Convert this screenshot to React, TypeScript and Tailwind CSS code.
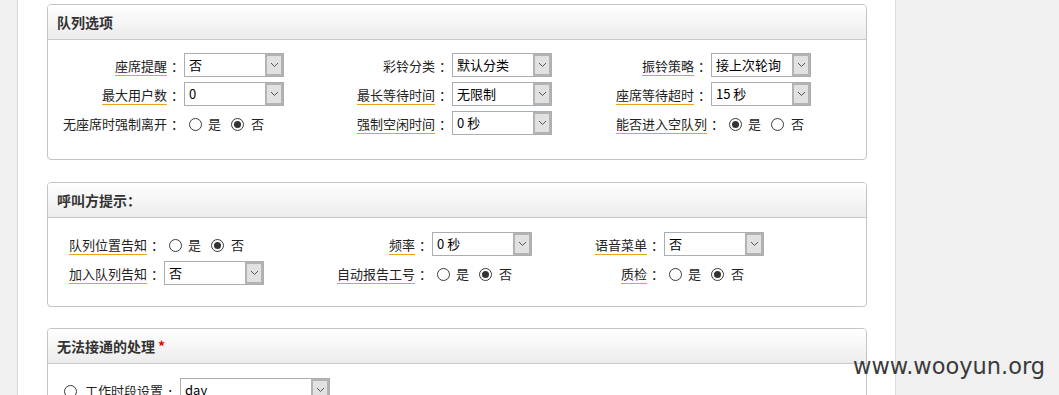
const FONT = "font-['Noto_Sans_CJK_SC','Noto_Sans',sans-serif]"

const Chevron = () => (
  <svg width="9" height="6" viewBox="0 0 9 6" className="block">
    <path d="M1 1 L4.5 4.5 L8 1" fill="none" stroke="#555" strokeWidth="1" />
  </svg>
)

const Select = ({ value, w = 100 }: { value: string; w?: number }): React.ReactElement => (
  <div
    className="flex h-[24px] shrink-0 items-stretch border border-[#a9aeb3] bg-white"
    style={{ width: w }}
  >
    <span className="flex-1 truncate pl-[4px] text-[13px] leading-[22px] text-black">{value}</span>
    <span className="flex w-[18px] items-center justify-center border-[2px] border-[#b3b3b3] bg-[#e1e1e1]">
      <Chevron />
    </span>
  </div>
)

const Dot = ({ on }: { on?: boolean }) => (
  <span className="flex h-[13px] w-[13px] shrink-0 items-center justify-center rounded-full border border-[#3a3a3a] bg-white">
    {on && <span className="h-[7px] w-[7px] rounded-full bg-[#333]" />}
  </span>
)

const YesNo = ({ yes }: { yes: boolean }) => (
  <div className="ml-[9px] mt-[7px] flex h-[18px] items-center text-[13px] text-[#222]">
    <Dot on={yes} />
    <span className="ml-[6px]">是</span>
    <span className="ml-[10px]"><Dot on={!yes} /></span>
    <span className="ml-[7px]">否</span>
  </div>
)

const Colon = () => <span className="inline-block h-[18px] w-[13px] pl-[4px] leading-[16px]">：</span>

const Label = ({ text, w, line = true }: { text: string; w: number; line?: boolean }) => (
  <div className="flex h-[29px] shrink-0 justify-end whitespace-nowrap pt-[8px] text-[13px] text-[#222]" style={{ width: w }}>
    <span className={`h-[18px] leading-[16px] ${line ? 'border-b border-[#eaa31d]' : ''}`}>{text}</span>
    <Colon />
  </div>
)

type Cell = { label: string; lw: number; cw: number; line?: boolean; sel?: string; yes?: boolean }

const Row = ({ cells }: { cells: Cell[] }) => (
  <div className="flex h-[29px] items-start">
    {cells.map(c => (
      <div key={c.label} className="flex items-start">
        <Label text={c.label} w={c.lw} line={c.line} />
        <div className="flex shrink-0 items-start" style={{ width: c.cw }}>
          {c.sel !== undefined ? <div className="ml-[4px] mt-[3px]"><Select value={c.sel} /></div> : <YesNo yes={!!c.yes} />}
        </div>
      </div>
    ))}
  </div>
)

const Panel = ({ title, star, children, body }: { title: string; star?: boolean; children: React.ReactNode; body: string }) => (
  <div className="w-[820px] overflow-hidden rounded-[4px] border border-[#c4c4c4] bg-white">
    <div className="flex h-[35px] items-center border-b border-[#c8c8c8] bg-gradient-to-b from-white to-[#ececec] pl-[9px] text-[14px] font-bold text-[#333]">
      {title}
      {star && <span className="ml-[3px] text-[#e00]">*</span>}
    </div>
    <div className={body}>{children}</div>
  </div>
)

const App = (): React.ReactElement => (
  <div className={`relative flex h-[395px] w-[1059px] overflow-hidden bg-[#f0f0f0] ${FONT}`}>
    <div className="w-[17px] shrink-0" />
    <div className="w-[879px] shrink-0 border-x border-[#dadada] bg-white pl-[29px] pt-[4px]">
      <Panel title="队列选项" body="pt-[10px] pb-[22px]">
        <Row cells={[
          { label: '座席提醒', lw: 132, cw: 154, sel: '否' },
          { label: '彩铃分类', lw: 114, cw: 154, sel: '默认分类', line: false },
          { label: '振铃策略', lw: 105, cw: 150, sel: '接上次轮询' },
        ]} />
        <Row cells={[
          { label: '最大用户数', lw: 132, cw: 154, sel: '0' },
          { label: '最长等待时间', lw: 114, cw: 154, sel: '无限制' },
          { label: '座席等待超时', lw: 105, cw: 150, sel: '15 秒' },
        ]} />
        <Row cells={[
          { label: '无座席时强制离开', lw: 132, cw: 154, yes: false, line: false },
          { label: '强制空闲时间', lw: 114, cw: 154, sel: '0 秒' },
          { label: '能否进入空队列', lw: 118, cw: 150, yes: true },
        ]} />
      </Panel>
      <div className="h-[22px]" />
      <Panel title="呼叫方提示：" body="pt-[11px] pb-[19px]">
        <Row cells={[
          { label: '队列位置告知', lw: 112, cw: 154, yes: false },
          { label: '频率', lw: 114, cw: 154, sel: '0 秒' },
          { label: '语音菜单', lw: 78, cw: 150, sel: '否' },
        ]} />
        <Row cells={[
          { label: '加入队列告知', lw: 112, cw: 154, sel: '否' },
          { label: '自动报告工号', lw: 114, cw: 154, yes: false },
          { label: '质检', lw: 78, cw: 150, yes: false },
        ]} />
      </Panel>
      <div className="h-[21px]" />
      <Panel title="无法接通的处理" star body="pt-[11px] pb-[20px]">
        <div className="flex h-[29px] items-start pl-[16px] text-[13px] text-[#222]">
          <div className="mt-[7px] flex h-[18px] items-center"><Dot /></div>
          <span className="ml-[8px] mt-[8px] h-[18px] leading-[16px]">工作时段设置</span>
          <span className="mt-[8px]"><Colon /></span>
          <div className="ml-[4px] mt-[3px]"><Select value="day" w={150} /></div>
        </div>
      </Panel>
    </div>
    <div className="absolute left-[853px] top-[355px] font-['DejaVu_Sans',sans-serif] text-[22.5px] leading-[22px] text-[#3a3a3a]">
      www.wooyun.org
    </div>
  </div>
)

export default App
